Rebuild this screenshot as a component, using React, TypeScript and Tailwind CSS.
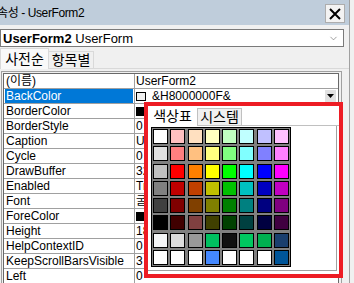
import { ChevronDown } from 'lucide-react'

const FONT = { fontFamily: '"Liberation Sans", "Noto Sans CJK KR", sans-serif' }

const PALETTE: string[][] = [
  ['#ffffff', '#ffc0c0', '#ffe0c0', '#ffffc0', '#c0ffc0', '#c0ffff', '#c0c0ff', '#ffc0ff'],
  ['#e0e0e0', '#ff8080', '#ffc080', '#ffff80', '#80ff80', '#80ffff', '#8080ff', '#ff80ff'],
  ['#c0c0c0', '#ff0000', '#ff8000', '#ffff00', '#00ff00', '#00ffff', '#0000ff', '#ff00ff'],
  ['#808080', '#c00000', '#c04000', '#c0c000', '#00c000', '#00c0c0', '#0000c0', '#c000c0'],
  ['#404040', '#800000', '#804000', '#808000', '#008000', '#008080', '#000080', '#800080'],
  ['#000000', '#400000', '#804040', '#404000', '#004000', '#004040', '#000040', '#400040'],
  ['#f4f5f7', '#dcdcdc', '#999999', '#00c060', '#111111', '#00c860', '#00b050', '#1a3f6e'],
  ['#ffffff', '#ffffff', '#ffffff', '#4488ff', '#ffffff', '#ffffff', '#ffffff', '#005599'],
]

type Prop = { name: string; value: string; swatch?: string; selected?: boolean }

const PROPS: Prop[] = [
  { name: '(이름)', value: 'UserForm2' },
  { name: 'BackColor', value: '&H8000000F&', swatch: '#f0f0f0', selected: true },
  { name: 'BorderColor', value: '&H80000012&', swatch: '#000000' },
  { name: 'BorderStyle', value: '0 - fmBorderStyleNone' },
  { name: 'Caption', value: 'UserForm2' },
  { name: 'Cycle', value: '0 - fmCycleAllForms' },
  { name: 'DrawBuffer', value: '32000' },
  { name: 'Enabled', value: 'True' },
  { name: 'Font', value: '굴림' },
  { name: 'ForeColor', value: '&H80000012&', swatch: '#000000' },
  { name: 'Height', value: '180' },
  { name: 'HelpContextID', value: '0' },
  { name: 'KeepScrollBarsVisible', value: '3 - fmScrollBarsBoth' },
  { name: 'Left', value: '0' },
]

export default function App() {
  return (
    <div className="relative flex w-[354px] h-[283px] overflow-hidden bg-[#f0f0f0] text-black" style={FONT}>
      <div className="w-[349px] flex flex-col">
        {/* title bar */}
        <div className="h-[25px] shrink-0 bg-[#bfcddb] flex items-center justify-between pr-[4px] overflow-hidden">
          <span className="ml-[-3px] text-[12px] tracking-[-0.4px] whitespace-nowrap">속성 - UserForm2</span>
          <button className="w-[20px] h-[19px] mt-[2px] flex items-center justify-center bg-[#f3f3f3] border border-[#adadad]">
            <svg width="12" height="12" viewBox="0 0 12 12">
              <path d="M1 1L11 11M11 1L1 11" stroke="black" strokeWidth="2" />
            </svg>
          </button>
        </div>

        {/* object combo */}
        <div className="mt-[4px] h-[18px] w-[344px] shrink-0 bg-white border border-[#7a7a7a] flex items-center justify-between pl-[2px] pr-[4px] text-[13px] leading-none">
          <span className="whitespace-nowrap">
            <b>UserForm2</b> UserForm
          </span>
          <ChevronDown size={11} strokeWidth={1.3} className="text-[#606060]" />
        </div>

        {/* tabs */}
        <div className="mt-[1px] h-[21px] shrink-0 flex items-end text-[14px] leading-none">
          <div className="h-[21px] w-[49px] bg-[#f9f9f9] border border-b-0 border-[#d9d9d9] flex items-center justify-center">
            사전순
          </div>
          <div className="h-[18px] w-[45px] bg-[#f0f0f0] border border-l-0 border-[#d9d9d9] flex items-center justify-center">
            항목별
          </div>
          <div className="flex-1 border-b border-[#d9d9d9]" />
        </div>

        {/* property grid */}
        <div className="mt-[2px] ml-[1px] w-[341px] border-l border-t border-r border-[#a0a0a0] pl-[1px] pt-[1px] pr-[2px]">
          <div className="border-l border-t border-r border-[#696969] bg-white text-[12px]">
            {PROPS.map(p => (
              <div key={p.name} className="flex h-[15px] border-b border-[#a0a0a0]">
                <div className="w-[131px] shrink-0 border-r border-[#a0a0a0] px-[1px]">
                  <div className={`h-full pl-[1px] leading-[14px] whitespace-nowrap ${p.selected ? 'bg-[#0078d7] text-white' : ''}`}>
                    {p.name}
                  </div>
                </div>
                <div className="flex-1 flex items-center pl-[1px] whitespace-nowrap leading-[14px] overflow-hidden">
                  {p.swatch && (
                    <span className="w-[10px] h-[9px] mr-[6px] shrink-0 border border-black" style={{ background: p.swatch }} />
                  )}
                  <span className="flex-1">{p.value}</span>
                  {p.selected && (
                    <span className="w-[11px] h-[12px] mr-[2px] bg-[#e1e1e1] flex items-center justify-center">
                      <svg width="7" height="4" viewBox="0 0 7 4">
                        <path d="M0 0H7L3.5 4Z" fill="black" />
                      </svg>
                    </span>
                  )}
                </div>
              </div>
            ))}
          </div>
        </div>
      </div>
      <div className="w-px bg-[#a0a0a0]" />

      {/* colour picker popup, outlined in red */}
      <div className="absolute left-[144px] top-[102px] w-[199px] h-[176px] border-4 border-[#ed1c24] bg-white flex flex-col">
        <div className="h-[20px] flex items-end text-[14px] leading-none">
          <div className="h-[20px] w-[49px] flex items-center justify-center">색상표</div>
          <div className="h-[18px] w-[45px] bg-[#f0f0f0] border border-[#c0c0c0] flex items-center justify-center">
            시스템
          </div>
          <div className="flex-1 border-b border-[#c0c0c0]" />
        </div>
        <div className="w-[189px] h-[145px] border-r border-b border-[#a0a0a0] pl-[3px] pt-[1px]">
          <div className="w-[140px] h-[140px] border border-black bg-[#808080] p-[1px] grid grid-cols-8 gap-[2px]">
            {PALETTE.flat().map((c, i) => (
              <div key={i} className="w-[15px] h-[15px] border border-black" style={{ background: c }} />
            ))}
          </div>
        </div>
      </div>
    </div>
  )
}
